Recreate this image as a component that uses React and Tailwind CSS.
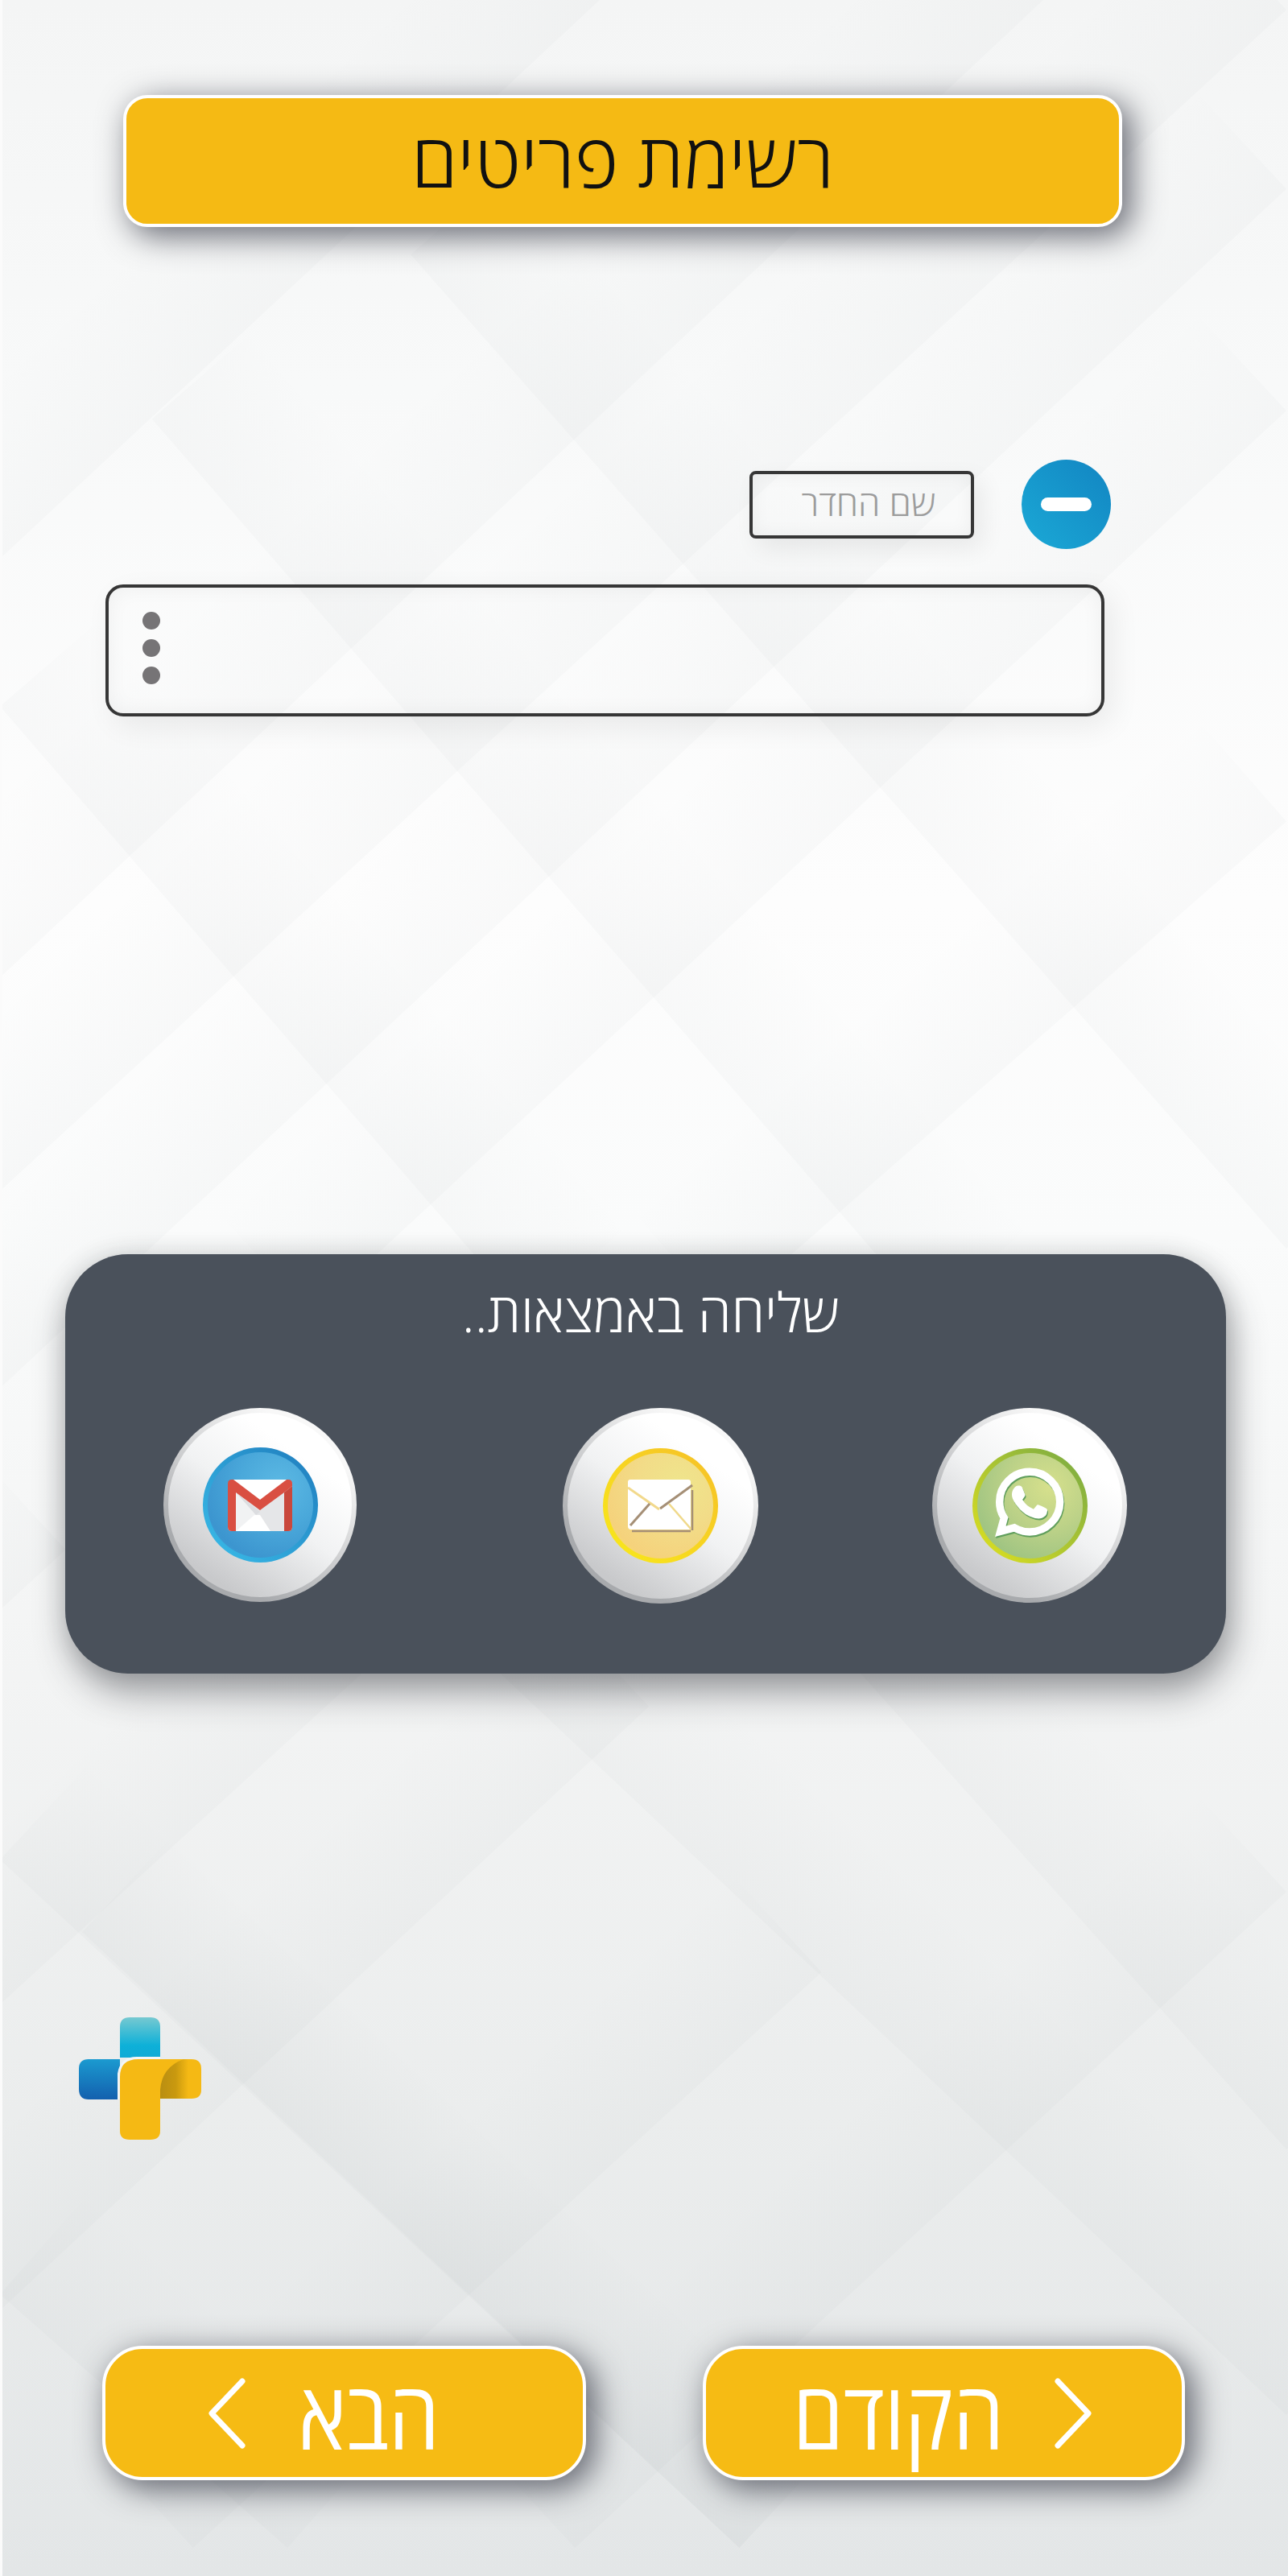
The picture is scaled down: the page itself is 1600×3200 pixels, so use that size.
import React from "react";
import { FaWhatsapp } from "react-icons/fa";

const up = [
  [[0,1450],[1566,12]],[[0,680],[730,0]],[[0,1190],[1270,0]],[[0,1690],[1566,230]],[[380,1600],[1566,500]],[[880,1600],[1566,1000]],
  [[0,860],[640,1600]],[[185,510],[1130,1600]],[[500,310],[1566,1520]],
];
const low = [
  [[0,2000],[80,1925]],[[0,2490],[450,2070]],[[235,3165],[1000,2450]],[[0,2870],[790,2120]],[[700,3165],[1566,2350]],
  [[0,2310],[900,3165]],[[100,2400],[900,3165]],[[600,2070],[1566,3000]],[[1040,2070],[1566,2670]],[[0,2850],[350,3165]],
];

function Backdrop() {
  const lines = [...up.map(l => l.map(([x, y]) => [x / 0.98, y / 0.98])), ...low.map(l => l.map(([x, y]) => [x / 0.98, y]))];
  const W = 170;
  const normal = ([a, b]) => {
    const dx = b[0] - a[0], dy = b[1] - a[1], len = Math.hypot(dx, dy);
    let nx = -dy / len, ny = dx / len;
    if (ny > 0) { nx = -nx; ny = -ny; }
    return [nx, ny];
  };
  return (
    <svg className="absolute inset-0" width="1600" height="3200" viewBox="0 0 1600 3200">
      <defs>
        {lines.map((l, i) => {
          const [nx, ny] = normal(l);
          const a = l[0];
          return (
            <linearGradient key={i} id={`g${i}`} gradientUnits="userSpaceOnUse" x1={a[0]} y1={a[1]} x2={a[0] + nx * W} y2={a[1] + ny * W}>
              <stop offset="0" stopColor="#5d6b70" stopOpacity="0.028" />
              <stop offset="1" stopColor="#5d6b70" stopOpacity="0" />
            </linearGradient>
          );
        })}
      </defs>
      {lines.map((l, i) => {
        const [nx, ny] = normal(l);
        const [a, b] = l;
        const pts = [a, b, [b[0] + nx * W, b[1] + ny * W], [a[0] + nx * W, a[1] + ny * W]];
        return <polygon key={i} points={pts.map(p => p.join(",")).join(" ")} fill={`url(#g${i})`} />;
      })}
      <rect x="0" y="0" width="3" height="3200" fill="#fbfbfb" />
    </svg>
  );
}

function Badge({ ring, face, children, className }) {
  return (
    <div className={`relative flex shrink-0 items-center justify-center rounded-full bg-[linear-gradient(215deg,#f8f8f8_20%,#a8aaad_78%)] p-[6px] ${className}`}>
      <div className="flex h-full w-full items-center justify-center rounded-full bg-[linear-gradient(215deg,#ffffff_25%,#f1f2f3_50%,#c8c9cb_84%)]">
        <div className={`flex h-[143px] w-[143px] items-center justify-center rounded-full p-[6px] ${ring}`}>
          <div className={`flex h-full w-full items-center justify-center rounded-full ${face}`}>{children}</div>
        </div>
      </div>
    </div>
  );
}

function Gmail() {
  return (
    <svg width="80" height="64" viewBox="0 0 80 64">
      <path d="M5 0H75L80 5V59Q80 64 75 64H5Q0 64 0 59V5Z" fill="#e5e6e8" />
      <path d="M10 14L35 44L10 64Z" fill="#f1f2f3" />
      <path d="M10 64L33 44H40L53 64Z" fill="#ffffff" />
      <path d="M10 16L40 40L35 44Z" fill="#dcdde0" />
      <path d="M5 0H75L40 28Z" fill="#ffffff" />
      <path d="M0 5Q0 0 5 0H7L40 25L73 0H75Q80 0 80 5V8L70 16V64H75Q80 64 80 59V5V59Q80 64 75 64H70V16L40 38L10 16V64H5Q0 64 0 59Z" fill="#d94f42" />
      <path d="M70 16L80 8V59Q80 64 75 64H70Z" fill="#c9483c" />
    </svg>
  );
}

function Envelope() {
  return (
    <svg width="82" height="66" viewBox="0 0 82 66">
      <path d="M3 0H75Q78 0 78 3V60Q78 62 76 62H4Q0 62 0 58V3Q0 0 3 0Z" fill="#ffffff" />
      <path d="M80 13V63M5 64H78" stroke="#a58f76" strokeWidth="2.5" fill="none" />
      <path d="M40 36L80 7" stroke="#a58f76" strokeWidth="3" fill="none" />
      <path d="M0 10L39 37" stroke="#f2d98c" strokeWidth="3" fill="none" />
      <path d="M3 57L27 30" stroke="#a58f76" strokeWidth="3" fill="none" />
      <path d="M51 30L78 61" stroke="#f0d98a" strokeWidth="2.5" fill="none" />
    </svg>
  );
}

function Logo() {
  return (
    <svg width="152" height="153" viewBox="0 0 152 153" className="block">
      <defs>
        <linearGradient id="lc" x1="0" y1="0" x2="0" y2="1"><stop offset="0" stopColor="#76c9d1" /><stop offset="0.7" stopColor="#0db0d8" /><stop offset="1" stopColor="#10aad6" /></linearGradient>
        <linearGradient id="lb" x1="0" y1="0" x2="0" y2="1"><stop offset="0" stopColor="#1b9ad0" /><stop offset="1" stopColor="#1360ae" /></linearGradient>
        <linearGradient id="lf" x1="0" y1="0" x2="1" y2="0"><stop offset="0" stopColor="#b98e12" /><stop offset="0.55" stopColor="#c9990f" /><stop offset="1" stopColor="#f5b914" /></linearGradient>
      </defs>
      <path d="M51 50V12Q51 0 63 0H89Q101 0 101 12V50Z" fill="url(#lc)" />
      <path d="M51 52H12Q0 52 0 64V89Q0 102 12 102H51Z" fill="url(#lb)" />
      <path d="M72 49H101V52H72Q53 52 51 72V102H48V70Q51 49 72 49Z" fill="#f2f5f6" />
      <path d="M74 52H140Q152 52 152 64V90Q152 101 140 101H101V141Q101 152 89 152H63Q51 152 51 141V74Q51 52 74 52Z" fill="#f5b914" />
      <path d="M101 101V90Q103 62 130 52H136V101Z" fill="url(#lf)" />
    </svg>
  );
}

function Chevron({ d }) {
  return (
    <svg width="52" height="92" viewBox="0 0 52 92" className="block">
      <path d={d} fill="none" stroke="#ffffff" strokeWidth="7" strokeLinecap="round" strokeLinejoin="round" />
    </svg>
  );
}

export default function App() {
  return (
    <div dir="ltr" className="relative h-[3200px] w-full overflow-hidden bg-[linear-gradient(180deg,#f4f5f5_0%,#f8f9f9_15%,#fdfdfd_35%,#fafbfb_48%,#f3f4f4_65%,#ebeded_82%,#e3e6e7_100%)] font-['Open_Sans','Noto_Sans',sans-serif]">
      <Backdrop />
      <div className="relative flex flex-col">
        <div className="ml-[153px] mt-[118px] flex h-[164px] w-[1241px] items-center justify-center rounded-[30px] border-[4px] border-white bg-[#f5ba14] pb-[6px] shadow-[10px_10px_38px_2px_rgba(55,58,70,0.72)]">
          <span dir="rtl" className="text-[93px] font-light leading-none text-[#111111]">רשימת פריטים</span>
        </div>

        <div className="ml-[931px] mt-[289px] flex items-center gap-[59px]">
          <div className="flex h-[84px] w-[279px] items-center justify-end rounded-[8px] border-[4px] border-[#363636] pb-[6px] pr-[44px] shadow-[10px_12px_30px_rgba(0,0,0,0.07),inset_0_0_22px_rgba(0,0,0,0.05)]">
            <span dir="rtl" className="text-[44px] font-light leading-none text-[#9c9c9c]">שם החדר</span>
          </div>
          <div className="flex h-[111px] w-[111px] items-center justify-center rounded-full bg-[linear-gradient(45deg,#1ba9d6,#1285c2)]">
            <div className="h-[17px] w-[63px] rounded-full bg-white" />
          </div>
        </div>

        <div className="ml-[131px] mt-[44px] flex h-[164px] w-[1241px] flex-col justify-center gap-[12px] rounded-[22px] border-[4px] border-[#363636] pb-[6px] pl-[42px] shadow-[10px_12px_36px_rgba(0,0,0,0.07),inset_0_0_26px_rgba(0,0,0,0.05)]">
          <div className="h-[22px] w-[22px] rounded-full bg-[#767476]" />
          <div className="h-[22px] w-[22px] rounded-full bg-[#767476]" />
          <div className="h-[22px] w-[22px] rounded-full bg-[#767476]" />
        </div>

        <div className="ml-[81px] mt-[668px] flex h-[521px] w-[1442px] flex-col rounded-[78px] bg-[#4a515b] shadow-[6px_24px_44px_rgba(40,44,50,0.42),0_0_30px_rgba(40,44,50,0.15)]">
          <div dir="rtl" className="mt-[31px] pl-[12px] text-center text-[67px] font-light leading-[80px] text-white">שליחה באמצאות..</div>
          <div className="ml-[122px] mt-[80px] flex">
            <Badge className="h-[241px] w-[240px]" ring="bg-[linear-gradient(225deg,#1f7cbd,#3abde9)]" face="bg-[radial-gradient(circle_at_68%_32%,#5cb9e4_0%,#4aa8da_40%,#3c95cf_75%,#3fa8dd_100%)]">
              <Gmail />
            </Badge>
            <Badge className="ml-[256px] h-[243px] w-[243px]" ring="bg-[linear-gradient(225deg,#f6bf28,#f8ea1a)]" face="bg-[radial-gradient(circle_at_68%_30%,#efe58c_0%,#f2dc88_40%,#f5d27c_75%,#faea60_100%)]">
              <Envelope />
            </Badge>
            <Badge className="ml-[216px] h-[242px] w-[242px]" ring="bg-[linear-gradient(225deg,#75a845,#e2e21e)]" face="bg-[radial-gradient(circle_at_68%_32%,#d6e08c_0%,#bdd288_40%,#9fc482_78%,#d8e050_100%)]">
              <FaWhatsapp size={94} color="#ffffff" stroke="#ffffff" strokeWidth={14} className="mb-[8px] drop-shadow-[1px_2px_0_#5f9e5c]" />
            </Badge>
          </div>
        </div>

        <div className="ml-[98px] mt-[427px]"><Logo /></div>

        <div className="ml-[127px] mt-[255px] flex gap-[145px]">
          <div className="flex h-[167px] w-[601px] items-center rounded-[50px] border-[4px] border-white bg-[#f6bb14] pl-[126px] shadow-[10px_10px_38px_2px_rgba(55,58,70,0.72)]">
            <Chevron d="M44 6L6 46L44 86" />
            <span dir="rtl" className="ml-[62px] origin-left scale-x-[0.86] text-[117px] leading-none text-white">הבא</span>
          </div>
          <div className="flex h-[167px] w-[599px] items-center justify-between rounded-[50px] border-[4px] border-white bg-[#f6bb14] pl-[108px] pr-[110px] shadow-[10px_10px_38px_2px_rgba(55,58,70,0.72)]">
            <span dir="rtl" className="origin-left scale-x-[0.86] text-[117px] leading-none text-white">הקודם</span>
            <Chevron d="M8 6L46 46L8 86" />
          </div>
        </div>
      </div>
    </div>
  );
}
